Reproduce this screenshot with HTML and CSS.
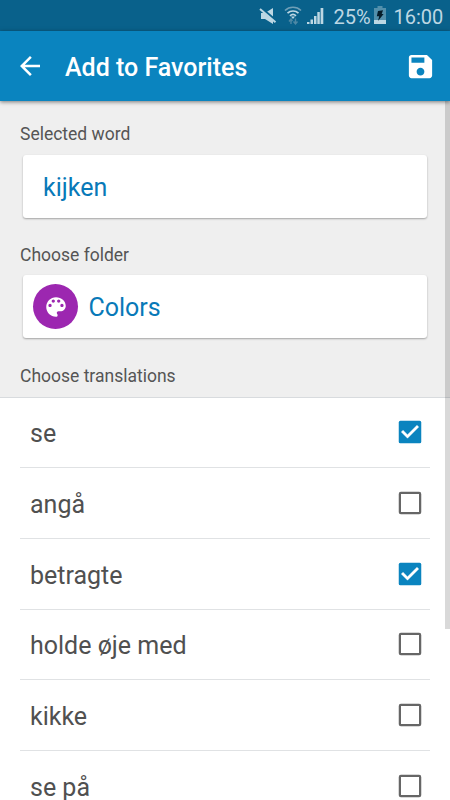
FILE: index.html
```html
<!DOCTYPE html>
<html lang="en">
<head>
<meta charset="utf-8">
<title>Add to Favorites</title>
<link rel="stylesheet" href="styles.css">
</head>
<body>
<svg class="defs" width="0" height="0" aria-hidden="true">
  <symbol id="checked" viewBox="0 0 24 24">
    <rect x="3" y="3" width="18" height="18" rx="1.3" fill="#0a84bf"/>
    <path d="M10 17l-5-5 1.41-1.41L10 14.17l7.59-7.59L19 8z" fill="#fff" stroke="#fff" stroke-width=".3"/>
  </symbol>
  <symbol id="unchecked" viewBox="0 0 24 24">
    <rect x="3.9" y="3.9" width="16.2" height="16.2" rx="0.8" fill="none" stroke="#666" stroke-width="1.8"/>
  </symbol>
</svg>
<div class="screen">
  <div class="status">
    <svg class="system-icons" viewBox="0 0 70 31">
      <g fill="#bdd7e3">
        <path d="M10 13h4l8-5v16l-8-5h-4z"/>
        <path d="M9.500 8l15.500 13" stroke="#09618b" stroke-width="3"/>
        <path d="M9 9l15.500 13.200" stroke="#bdd7e3" stroke-width="2"/>
      </g>
      <g fill="none" stroke="#bdd7e3" stroke-width="1.700">
        <path d="M34 10.500a11.500 11.500 0 0 1 16 0" stroke="#6f9fb7"/>
        <path d="M36.500 13.200a8 8 0 0 1 11 0"/>
        <path d="M39 15.800a4.500 4.500 0 0 1 6 0"/>
      </g>
      <path d="M40 16.500h4l-2 2.500z" fill="#bdd7e3"/>
      <path d="M40 24v-5m-2 2.500l2-2.500 1.500 2M44.500 18.500v5m-2-2l2 2.500 2-2.500" fill="none" stroke="#4e88a5" stroke-width="1.400"/>
      <path d="M56 24v-2h2.500v2zM59.500 24v-4.500h2.500v4.500zM63 24v-8h2.500v8zM66.300 24v-12h2.500v12zM69.600 24v-16h2.700v16z" fill="#bdd7e3"/>
    </svg>
    <span class="percent">25%</span>
    <svg class="battery" viewBox="0 0 12 18">
      <path d="M3.500 0h5v2h3.500v16h-12v-16h3.500z" fill="#5290ac"/>
      <path d="M0 14h12v4h-12z" fill="#bdd7e3"/>
      <path d="M4 5l5-.7-1.300 3.700h1.900l-5.600 7 1.200-4.700h-2.400z" fill="#051c29"/>
    </svg>
    <span class="clock">16:00</span>
  </div>
  <header class="toolbar">
    <svg class="back" viewBox="0 0 24 24"><path d="M20 11H7.830l5.590-5.590L12 4l-8 8 8 8 1.410-1.410L7.830 13H20z" fill="#fff"/></svg>
    <h1>Add to Favorites</h1>
    <svg class="save" viewBox="0 0 24 24"><path d="M17 3H5c-1.110 0-2 .9-2 2v14c0 1.100.890 2 2 2h14c1.100 0 2-.9 2-2V7zm-5 16c-1.660 0-3-1.340-3-3s1.340-3 3-3 3 1.340 3 3-1.340 3-3 3zm3-10H5V5h10z" fill="#fff"/></svg>
  </header>
  <main class="content">
    <section class="form">
      <p class="label">Selected word</p>
      <div class="card">kijken</div>
      <p class="label">Choose folder</p>
      <div class="card folder">
        <span class="avatar"><svg viewBox="0 0 24 24"><path d="M12 3c-4.970 0-9 4.030-9 9s4.030 9 9 9c.830 0 1.500-.670 1.500-1.500 0-.390-.150-.740-.390-1.010-.230-.260-.380-.610-.380-.990 0-.830.670-1.500 1.500-1.500H16c2.760 0 5-2.240 5-5 0-4.420-4.030-8-9-8zm-5.500 9c-.830 0-1.500-.670-1.500-1.500S5.670 9 6.500 9 8 9.670 8 10.500 7.330 12 6.500 12zm3-4C8.670 8 8 7.330 8 6.500S8.670 5 9.500 5s1.500.670 1.500 1.500S10.330 8 9.500 8zm5 0c-.830 0-1.500-.670-1.500-1.500S13.670 5 14.500 5s1.500.670 1.500 1.500S15.330 8 14.500 8zm3 4c-.830 0-1.500-.670-1.500-1.500S16.670 9 17.500 9s1.500.670 1.500 1.500-.670 1.500-1.500 1.500z" fill="#fff"/></svg></span>
        <span>Colors</span>
      </div>
      <p class="label">Choose translations</p>
    </section>
    <ul class="list">
      <li><span>se</span><svg viewBox="0 0 24 24"><use href="#checked"/></svg></li>
      <li><span>angå</span><svg viewBox="0 0 24 24"><use href="#unchecked"/></svg></li>
      <li><span>betragte</span><svg viewBox="0 0 24 24"><use href="#checked"/></svg></li>
      <li><span>holde øje med</span><svg viewBox="0 0 24 24"><use href="#unchecked"/></svg></li>
      <li><span>kikke</span><svg viewBox="0 0 24 24"><use href="#unchecked"/></svg></li>
      <li><span>se på</span><svg viewBox="0 0 24 24"><use href="#unchecked"/></svg></li>
    </ul>
    <div class="scrollbar"></div>
  </main>
</div>
</body>
</html>
```
FILE: styles.css
```css
* { box-sizing: border-box; }
body { margin: 0; font-family: Roboto, "Liberation Sans", sans-serif; }
h1, p, ul { margin: 0; padding: 0; }
svg { display: block; flex: none; }
.defs { position: absolute; }
.screen { width: 450px; height: 800px; display: flex; flex-direction: column; overflow: hidden; background: #fff; }
.status { height: 31px; flex: none; display: flex; align-items: center; padding: 3px 7.500px 0 0; justify-content: flex-end; background: #09618b; color: #bdd7e3; font-size: 20px; line-height: 28px; }
.system-icons { width: 70px; height: 31px; margin: -3px 13px 0 0; overflow: visible; }
.percent { width: 36px; margin-right: 4px; }
.battery { width: 12px; height: 18px; margin-top: -4px; margin-right: 8px; }
.clock { width: 49px; }
.toolbar { height: 70px; flex: none; display: flex; align-items: center; padding: 0 14px 0 15px; background: #0a84bf; color: #fff; position: relative; z-index: 1; box-shadow: 0 1px 4px rgba(0, 0, 0, .5); }
.back { width: 30px; height: 30px; }
.toolbar h1 { flex: 1; margin: 3px 0 0 20px; font-size: 25px; font-weight: 500; line-height: 30px; }
.save { width: 31px; height: 31px; }
.content { flex: 1; min-height: 0; position: relative; overflow: hidden; }
.form { height: 296.500px; padding: 22px 23px 0; background: #efefef; border-bottom: 1px solid #d8dbde; }
.label { margin-left: -3px; font-size: 17.5px; line-height: 22px; color: #555; }
.card { height: 63px; margin: 9.500px 0 26.300px; padding: 2px 20px 0; display: flex; align-items: center; background: #fff; border-radius: 3px; box-shadow: 0 1px 2px rgba(0, 0, 0, .32); color: #0879b8; font-size: 25px; }
.folder { padding: 0 10px; gap: 10.500px; }
.folder span:last-child { padding-top: 2px; }
.avatar { width: 45px; height: 45px; border-radius: 50%; background: #9c27b0; display: flex; align-items: center; justify-content: center; }
.avatar svg { width: 26px; height: 26px; }
.list { list-style: none; padding: 0 20px; }
.list li { height: 70.700px; display: flex; align-items: center; justify-content: space-between; padding: 0 5px 0 10px; border-bottom: 1px solid #e0e2e4; font-size: 25px; line-height: 30px; color: #505050; }
.list span { padding-top: 4px; }
.list svg { width: 30px; height: 30px; }
.scrollbar { position: absolute; top: 0; right: 0; width: 5px; height: 528px; background: rgba(0, 0, 0, .15); }
```
